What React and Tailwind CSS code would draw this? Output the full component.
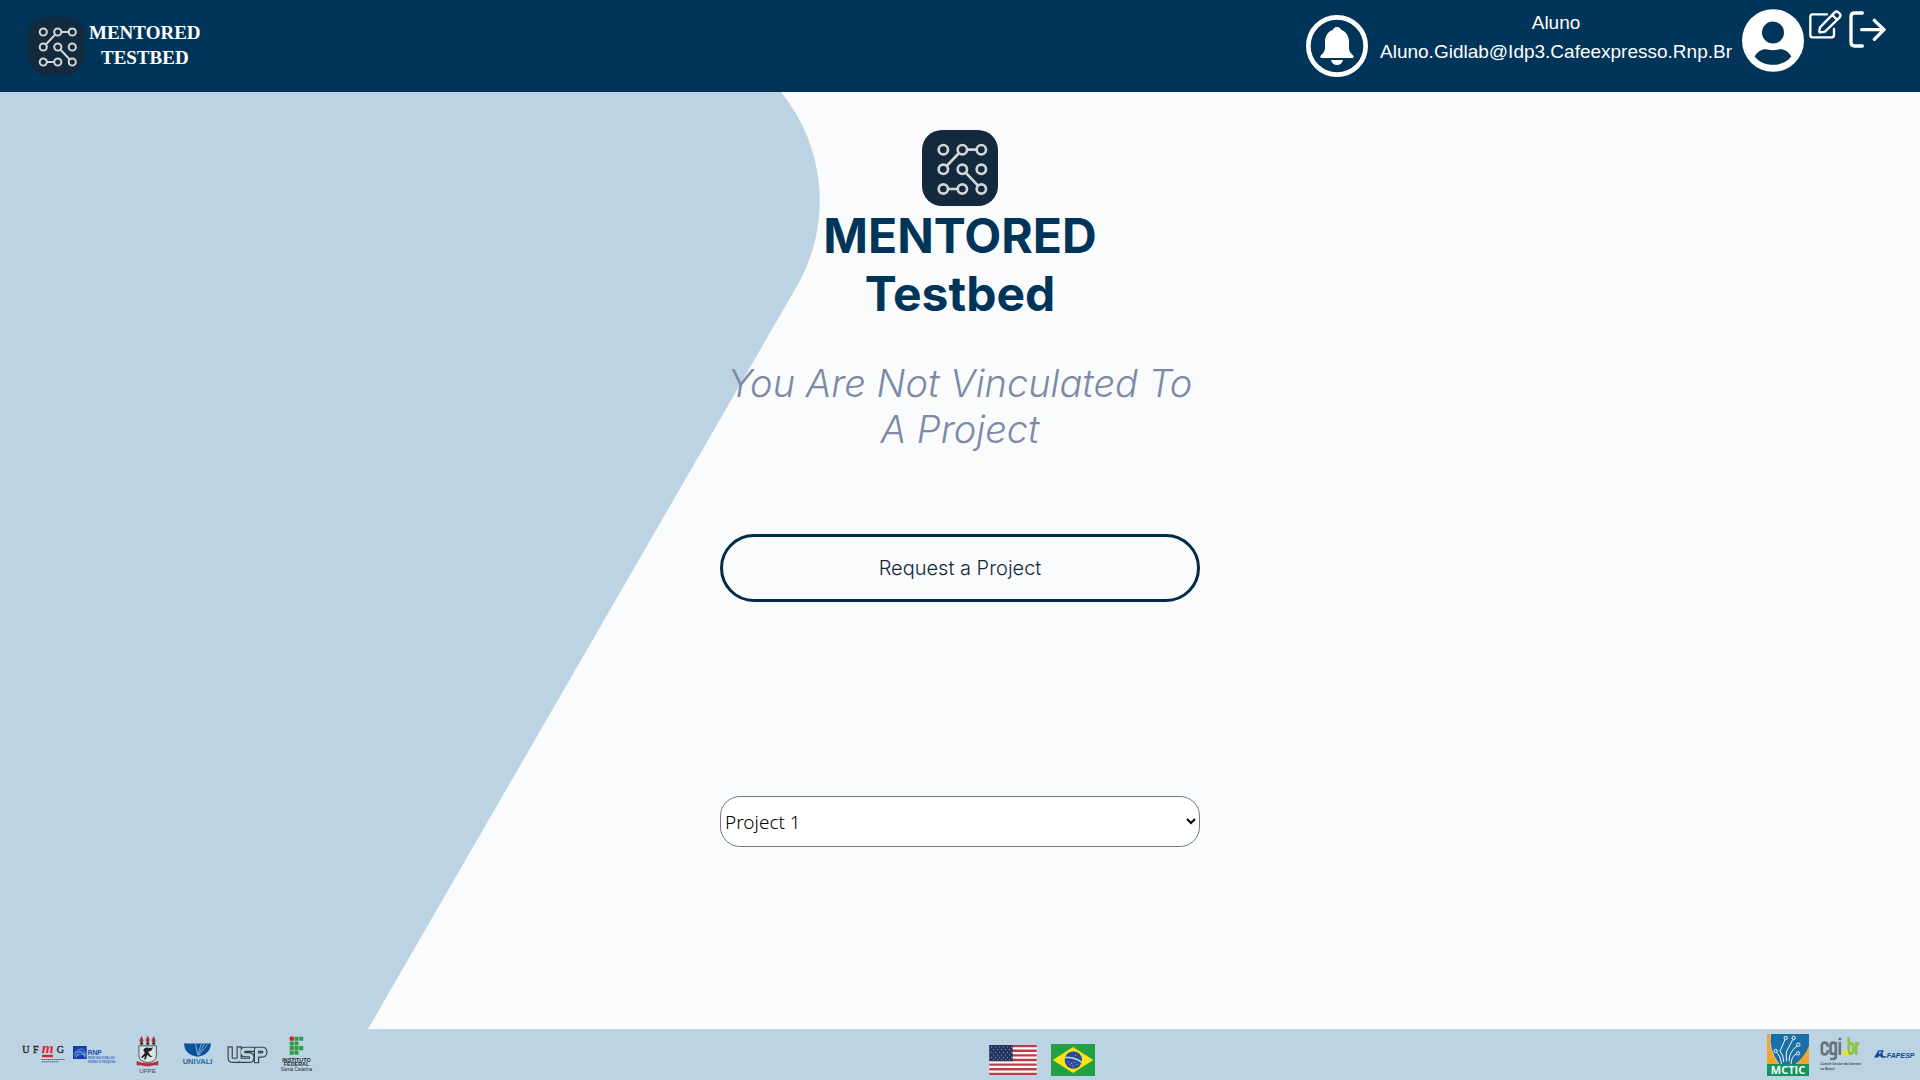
function Logo({ className }) {
  return (
    <svg viewBox="0 0 228 228" className={className} role="img" aria-label="MENTORED logo">
      <rect width="228" height="228" fill="#13293d" />
      <g stroke="#d2d4d6" strokeWidth="8" fill="none">
        <path d="M135 59H164M111 69L74 108M131 128L168 167M78 177H107" />
        {[59, 118, 177].map((y) =>
          [64, 121, 178].map((x) => <circle key={`${x}-${y}`} cx={x} cy={y} r="14" />)
        )}
      </g>
    </svg>
  );
}

function BellIcon() {
  return (
    <svg viewBox="0 0 186 186" className="size-[62px]" aria-hidden="true">
      <circle cx="93" cy="93" r="86" fill="none" stroke="#fff" strokeWidth="14" />
      <path
        fill="#fff"
        d="M93 36c6 0 10 3 12 8 15 5 24 19 24 36v18c0 10 4 15 12 23 4 4 2 8-2 8H47c-4 0-6-4-2-8 8-8 12-13 12-23V80c0-17 9-31 24-36 2-5 6-8 12-8zM75 135h36c-2 9-9 15-18 15s-16-6-18-15z"
      />
    </svg>
  );
}

function UserIcon() {
  return (
    <svg viewBox="0 0 186 188" className="h-[63px] w-[62px]" aria-hidden="true">
      <ellipse cx="93" cy="94" rx="93" ry="94" fill="#fff" />
      <circle cx="93" cy="70" r="33" fill="#003459" />
      <path
        fill="#003459"
        d="M38 142c9-15 20-22 33-22 5 0 11 3 22 3s17-3 22-3c13 0 24 7 33 22-14 17-33 25-55 25s-41-8-55-25z"
      />
    </svg>
  );
}

function EditIcon() {
  return (
    <svg viewBox="0 0 99 87" className="h-[29px] w-[33px]" aria-hidden="true">
      <g fill="none" stroke="#fff" strokeWidth="7" strokeLinecap="round" strokeLinejoin="round">
        <path d="M54 13H10Q4 13 4 20V75Q4 82 10 82H68Q75 82 75 75V57" />
        <path d="M33 52L77 7Q82 2 88 7L92 11Q97 16 92 22L48 65L35 67Q30 68 31 63ZM70 15L84 29" />
      </g>
    </svg>
  );
}

function LogoutIcon() {
  return (
    <svg viewBox="0 0 111 111" className="size-[37px]" aria-hidden="true">
      <g fill="none" stroke="#fff" strokeWidth="10" strokeLinecap="round" strokeLinejoin="round">
        <path d="M40 6H17Q6 6 6 17V94Q6 105 17 105H40M38 56H105M76 28L105 56L76 85" />
      </g>
    </svg>
  );
}

function Ufmg() {
  return (
    <svg viewBox="0 0 129 56" className="h-[19px] w-[43px] overflow-visible" role="img" aria-label="UFMG">
      <g fontFamily="'Liberation Serif', serif">
        <text x="1" y="23" fontSize="30" fill="#222" stroke="#222" strokeWidth="1">U</text>
        <text x="33" y="23" fontSize="30" fill="#222" stroke="#222" strokeWidth="1">F</text>
        <text x="59" y="24" fontSize="46" fontStyle="italic" fontWeight="bold" fill="#e0263a">m</text>
        <text x="104" y="23" fontSize="30" fill="#222" stroke="#222" strokeWidth="1">G</text>
      </g>
      <rect x="60" y="29" width="33" height="7" fill="#e0202c" />
      <path d="M59 43H128M59 50H110" stroke="#5b6771" strokeWidth="3" strokeDasharray="5 1" />
    </svg>
  );
}

function Rnp() {
  return (
    <svg viewBox="0 0 126 54" className="h-[18px] w-[42px] overflow-visible" role="img" aria-label="RNP">
      <rect width="41" height="39" fill="#0f3fae" />
      <path d="M5 32Q7 11 22 9T37 29M10 34Q13 18 24 17T35 34M5 21L20 15L37 31M12 29Q23 21 34 25" fill="none" stroke="#a9c0e6" strokeWidth="2" />
      <text x="44" y="26" fontFamily="'Liberation Sans', sans-serif" fontWeight="bold" fontSize="20" fill="#174bb5">RNP</text>
      <g fontFamily="'Liberation Sans', sans-serif" fontWeight="bold" fontSize="8" fill="#3d6bc2">
        <text x="45" y="39">REDE NACIONAL DE</text>
        <text x="45" y="50">ENSINO E PESQUISA</text>
      </g>
    </svg>
  );
}

function Ufpe() {
  return (
    <svg viewBox="0 0 70 120" className="h-[40px] w-[23px]" role="img" aria-label="UFPE">
      <g fill="#b52d3c">
        <path d="M17 2l6 13-4 8h-5l-4-8zM36 1l6 13-4 8h-5l-4-8zM54 2l6 13-4 8h-5l-4-8z" />
        <path d="M2 78Q35 92 68 78V91H55L35 95L14 91H2z" />
      </g>
      <path d="M12 25H22M31 25H41M49 25H59M17 19V31M36 19V31M54 19V31" stroke="#333" strokeWidth="4" />
      <path d="M9 32H62V63Q60 81 36 83Q10 80 9 63z" fill="#dce3e8" stroke="#4d585d" strokeWidth="3" />
      <path d="M22 45Q28 34 42 39L52 37L46 47L37 50L43 61L51 65L43 66L34 59L31 71L24 75L28 63L18 70L16 66L27 54z" fill="#222" />
      <text x="35" y="116" textAnchor="middle" fontFamily="'Liberation Sans', sans-serif" fontSize="19" fill="#3c474d">UFPE</text>
    </svg>
  );
}

function Univali() {
  return (
    <svg viewBox="0 0 100 68" className="h-[23px] w-[33px] overflow-visible" role="img" aria-label="UNIVALI">
      <path d="M9 1H91Q88 35 50 41Q11 35 9 1z" fill="#07539a" />
      <path d="M44 1L50 34L62 1M52 36L71 1M54 37L80 4" fill="none" stroke="#bcd3e3" strokeWidth="2" />
      <text x="50" y="64" textAnchor="middle" fontFamily="'Liberation Sans', sans-serif" fontWeight="bold" fontSize="23" fill="#266aa5">UNIVALI</text>
    </svg>
  );
}

function Usp() {
  const strokes =
    "M9 9V35Q9 43 18 43H28Q36 43 36 35V9M76 10H55Q46 10 46 18Q46 26 55 26H66Q74 26 74 35Q74 43 66 43H42M88 44V10H104Q113 10 113 18Q113 27 104 27H91";
  return (
    <svg viewBox="0 0 122 54" className="h-[18px] w-[41px]" role="img" aria-label="USP">
      <g fill="none" strokeLinejoin="round" strokeLinecap="square">
        <path d={strokes} stroke="#38434a" strokeWidth="16" />
        <path d={strokes} stroke="#bcd3e3" strokeWidth="9" />
      </g>
    </svg>
  );
}

function InstitutoFederal() {
  return (
    <svg viewBox="0 0 98 110" className="h-[37px] w-[33px]" role="img" aria-label="Instituto Federal Santa Catarina">
      <circle cx="35" cy="8" r="7" fill="#d9202a" />
      <path
        fill="#2f9e46"
        d="M43 2h12v12H43zM57 2h12v12H57zM29 16h12v12H29zM43 16h12v12H43zM29 30h12v12H29zM43 30h12v12H43zM57 30h12v12H57zM29 44h12v12H29zM43 44h12v12H43z"
      />
      <g textAnchor="middle" fontFamily="'Liberation Sans', sans-serif" fill="#1d2a2f">
        <text x="49" y="76" fontWeight="bold" fontSize="16">INSTITUTO</text>
        <text x="49" y="90" fontWeight="bold" fontSize="16">FEDERAL</text>
        <text x="49" y="105" fontSize="14">Santa Catarina</text>
      </g>
    </svg>
  );
}

function UsFlag() {
  return (
    <svg viewBox="0 0 144 91" className="h-[30px] w-[48px]" aria-hidden="true">
      <rect width="144" height="91" fill="#fff" />
      <path d="M0 3.5H144M0 17.5H144M0 31.5H144M0 45.5H144M0 59.5H144M0 73.5H144M0 87.5H144" stroke="#c03a46" strokeWidth="7" />
      <rect width="71" height="49" fill="#22335f" />
      {[6, 14, 22, 30, 38, 45].map((y, i) => (
        <path key={y} d={i % 2 ? "M12 " + y + "H70" : "M6 " + y + "H70"} stroke="#a9b3c6" strokeWidth="3" strokeDasharray="3 9" />
      ))}
    </svg>
  );
}

function BrFlag() {
  return (
    <svg viewBox="0 0 132 96" className="h-[32px] w-[44px]" aria-hidden="true">
      <rect width="132" height="96" fill="#249f43" />
      <path d="M66 9L127 48L66 87L5 48z" fill="#f8e511" />
      <circle cx="67" cy="48" r="26" fill="#2b4a9e" />
      <path d="M42 41Q70 38 92 55" fill="none" stroke="#b8dcd6" strokeWidth="5" />
      <path d="M51 54h3M60 58h3M68 55h3M76 62h3M64 66h3M55 63h3M72 34h3" stroke="#aebfdf" strokeWidth="3" />
    </svg>
  );
}

function Mctic() {
  return (
    <svg viewBox="0 0 126 126" className="size-[42px]" role="img" aria-label="MCTIC">
      <rect width="126" height="92" fill="#1a70a4" />
      <path d="M0 0H11Q2 46 37 92H0z" fill="#f4a62a" />
      <path d="M126 35V92H82Q111 72 126 35z" fill="#f4a62a" />
      <path d="M11 0Q2 46 37 92" fill="none" stroke="#e4f0f5" strokeWidth="2" />
      <g fill="none" stroke="#f3f8fa" strokeWidth="3">
        <path d="M43 92Q43 70 29 55M50 84Q51 65 39 51L54 17M58 82V54L77 17M66 82Q65 55 90 36M72 90Q73 67 88 60" />
        <circle cx="26" cy="51" r="5" />
        <circle cx="56" cy="12" r="5" />
        <circle cx="80" cy="12" r="5" />
        <circle cx="94" cy="32" r="5" />
        <circle cx="93" cy="58" r="5" />
      </g>
      <rect y="90" width="126" height="36" fill="#15945b" />
      <text x="63" y="119" textAnchor="middle" fontFamily="'Open Sans', sans-serif" fontWeight="bold" fontSize="33" fill="#fff">MCTIC</text>
    </svg>
  );
}

function CgiBr() {
  return (
    <svg viewBox="0 0 128 108" className="h-[36px] w-[43px] overflow-visible" role="img" aria-label="Comitê Gestor da Internet no Brasil">
      <g fill="none" strokeWidth="8">
        <path stroke="#68737a" d="M22 29V25Q22 17 14 17T5 26V44Q5 52 14 52T22 44V40M47 31V26Q47 17 39 17T31 26V43Q31 51 39 51T47 43M47 15V57Q47 66 39 66H30M59 15V54M59 2V10" />
        <path stroke="#8bc53f" d="M86 1V44Q86 50 92 50T99 43V27Q99 19 92 19T86 27M108 54V15M108 30Q108 19 117 19" />
      </g>
      <circle cx="76" cy="48" r="8" fill="#e4e51c" />
      <g fontFamily="'Liberation Sans', sans-serif" fontWeight="bold" fontSize="10" fill="#3d4a52">
        <text x="0" y="84">Comitê Gestor da Internet</text>
        <text x="0" y="98">no Brasil</text>
      </g>
    </svg>
  );
}

function Fapesp() {
  return (
    <svg viewBox="0 0 122 32" className="h-[11px] w-[41px] overflow-visible" role="img" aria-label="FAPESP">
      <path d="M0 25L13 3H29L25 14L30 25H21L17 19L12 25zM29 21H38L34 26H27z" fill="#124b94" />
      <path d="M16 7L23 8L19 13H13z" fill="#bcd3e3" />
      <text x="38" y="25" fontFamily="'Liberation Sans', sans-serif" fontWeight="bold" fontStyle="italic" fontSize="21" fill="#124b94">FAPESP</text>
    </svg>
  );
}

export default function App() {
  return (
    <div className="flex min-h-screen flex-col bg-[#fafbfc] font-['Liberation_Sans',sans-serif]">
      <header className="flex h-[92px] items-start justify-between bg-[#003459] pr-[34px] pl-[27px] text-white">
        <a href="#home" className="mt-[17px] flex gap-1">
          <Logo className="size-[58px] rounded-[20px]" />
          <span className="mt-[3px] text-center font-['Liberation_Serif',serif] text-[19px] leading-[25px] font-bold">
            MENTORED
            <br />
            TESTBED
          </span>
        </a>
        <div className="flex items-start">
          <button type="button" aria-label="Notifications" className="mt-[15px] mr-3">
            <BellIcon />
          </button>
          <p className="mt-2 mr-[10px] text-center text-[19px] leading-[29px]">
            Aluno
            <br />
            Aluno.Gidlab@Idp3.Cafeexpresso.Rnp.Br
          </p>
          <button type="button" aria-label="Account" className="mt-[9px] mr-[5px]">
            <UserIcon />
          </button>
          <button type="button" aria-label="Edit profile" className="mt-[10px] mr-[7px]">
            <EditIcon />
          </button>
          <button type="button" aria-label="Log out" className="mt-[11px]">
            <LogoutIcon />
          </button>
        </div>
      </header>

      <main className="relative flex flex-1 flex-col items-center overflow-hidden pt-[38px] font-['Inter',sans-serif]">
        <svg
          viewBox="0 0 1920 937"
          preserveAspectRatio="xMinYMin slice"
          className="absolute inset-0 size-full"
          aria-hidden="true"
        >
          <path d="M0 0H781A172 172 0 0 1 797 194L368 937H0z" fill="#bcd3e3" />
        </svg>
        <div className="relative flex w-[480px] flex-col items-center">
          <Logo className="size-[76px] rounded-[20px]" />
          <h1 className="mt-px text-center text-[48px] leading-[58px] font-bold text-[#003459]">
            MENTORED
            <br />
            Testbed
          </h1>
          <p className="mt-[37px] text-center text-[38px] leading-[46px] font-light text-[#7c8aa5] italic">
            You Are Not Vinculated To
            <br />
            A Project
          </p>
          <button
            type="button"
            className="mt-[82px] h-[68px] w-full rounded-full border-3 border-[#002b49] text-[20px] font-light text-[#13293d]"
          >
            Request a Project
          </button>
          <select
            aria-label="Project"
            className="mt-[194px] h-[51px] w-full appearance-auto rounded-[20px] border border-[#6f7b85] bg-white font-['Noto_Sans',sans-serif] text-[19px] font-light text-black"
          >
            <option>Project 1</option>
          </select>
        </div>
      </main>

      <footer className="flex h-[51px] items-center justify-between bg-[#bcd3e3] pr-[5px] pl-[22px]">
        <div className="flex items-center">
          <div className="mr-2"><Ufmg /></div>
          <div className="mr-[21px]"><Rnp /></div>
          <div className="mr-[22px]"><Ufpe /></div>
          <div className="mr-[13px]"><Univali /></div>
          <div className="mr-[12px]"><Usp /></div>
          <InstitutoFederal />
        </div>
        <div className="flex items-center gap-[14px] pt-[11px] pl-1">
          <button type="button" aria-label="English"><UsFlag /></button>
          <button type="button" aria-label="Português"><BrFlag /></button>
        </div>
        <div className="flex items-center gap-[11px]">
          <Mctic />
          <CgiBr />
          <Fapesp />
        </div>
      </footer>
    </div>
  );
}
